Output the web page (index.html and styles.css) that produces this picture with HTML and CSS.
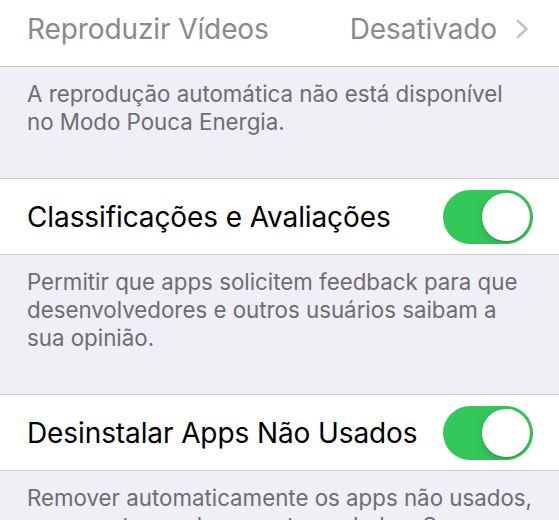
FILE: index.html
```html
<!DOCTYPE html>
<html lang="pt-BR">
<head>
    <meta charset="UTF-8">
    <meta name="viewport" content="width=device-width, initial-scale=1.0">
    <title>Ajustes</title>
    <link rel="stylesheet" href="styles.css">
</head>
<body>
    <div class="settings">
        <div class="group">
            <div class="row disabled">
                <span class="row-label">Reproduzir Vídeos</span>
                <span class="row-value">Desativado</span>
                <svg class="chevron" width="13" height="20" viewBox="0 0 13 20">
                    <path d="M2 2 L10.5 10 L2 18" fill="none" stroke="#c4c4c7" stroke-width="2.6" stroke-linecap="round" stroke-linejoin="round"/>
                </svg>
            </div>
        </div>
        <p class="footer">A reprodução automática não está disponível<br>no Modo Pouca Energia.</p>

        <div class="group">
            <div class="row">
                <span class="row-label">Classificações e Avaliações</span>
                <span class="toggle on"><span class="knob"></span></span>
            </div>
        </div>
        <p class="footer">Permitir que apps solicitem feedback para que<br>desenvolvedores e outros usuários saibam a<br>sua opinião.</p>

        <div class="group">
            <div class="row">
                <span class="row-label">Desinstalar Apps Não Usados</span>
                <span class="toggle on"><span class="knob"></span></span>
            </div>
        </div>
        <p class="footer">Remover automaticamente os apps não usados,<br>mas manter os documentos e dados. Se o app<br>ainda estiver disponível na App Store, ele será<br>reinstalado junto com os seus dados.</p>
    </div>
</body>
</html>
```

FILE: styles.css
```css
body {
    margin: 0;
    padding: 0;
    background-color: #f0eff5;
    font-family: Inter, "Noto Sans", sans-serif;
    -webkit-font-smoothing: antialiased;
}
.settings {
    margin-top: -10px;
}
.group {
    background: #ffffff;
    border-top: 1px solid #c8c7cc;
    border-bottom: 1px solid #c8c7cc;
}
.row {
    height: 75px;
    display: flex;
    align-items: center;
    padding: 0 26px 0 27px;
}
.row-label {
    flex: 1;
    font-size: 28px;
    letter-spacing: -0.1px;
    color: #000000;
}
.row.disabled .row-label,
.row-value {
    color: #8a8a8e;
}
.row-value {
    font-size: 28px;
    letter-spacing: -0.1px;
    margin-right: 19px;
}
.chevron {
    display: block;
    margin-right: 4px;
}
.toggle {
    position: relative;
    display: block;
    width: 90px;
    height: 54px;
    border-radius: 27px;
    background: #e9e9eb;
}
.toggle.on {
    background: #34c759;
}
.toggle .knob {
    position: absolute;
    top: 3px;
    left: 3px;
    width: 48px;
    height: 48px;
    border-radius: 50%;
    background: #ffffff;
    box-shadow: 0 3px 8px rgba(0, 0, 0, 0.15), 0 1px 1px rgba(0, 0, 0, 0.16);
}
.toggle.on .knob {
    left: 39px;
}
.footer {
    margin: 0;
    padding: 13px 27px 42px;
    font-size: 22.3px;
    line-height: 28px;
    color: #6d6d72;
}
```
